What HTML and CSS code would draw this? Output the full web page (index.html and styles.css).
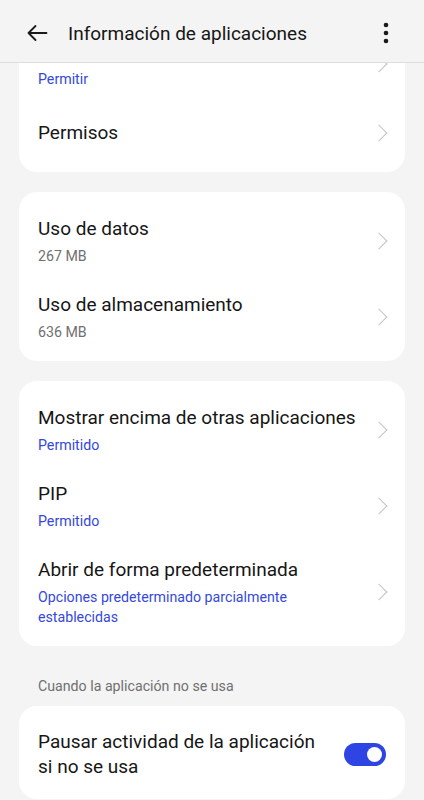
FILE: index.html
```html
<!DOCTYPE html>
<html lang="es">
<head>
<meta charset="utf-8">
<meta name="viewport" content="width=424, initial-scale=1">
<link rel="stylesheet" href="styles.css">
<title>Información de aplicaciones</title>
</head>
<body>
<div class="screen">
  <header class="appbar">
    <button class="icon-btn" aria-label="Atrás">
      <svg width="24" height="24" viewBox="0 0 24 24"><path d="M21.5 12H3.5M10.5 5L3.5 12L10.5 19" fill="none" stroke="#1a1a1a" stroke-width="1.8" stroke-linecap="round" stroke-linejoin="round"/></svg>
    </button>
    <h1 class="title">Información de aplicaciones</h1>
    <button class="icon-btn menu" aria-label="Más opciones">
      <svg width="6" height="22" viewBox="0 0 6 22"><circle cx="3" cy="3" r="2.3" fill="#1a1a1a"/><circle cx="3" cy="11" r="2.3" fill="#1a1a1a"/><circle cx="3" cy="19" r="2.3" fill="#1a1a1a"/></svg>
    </button>
  </header>
  <main class="content">
    <section class="card card-first">
      <div class="row">
        <div class="text">
          <div class="label-space"></div>
          <div class="sub accent">Permitir</div>
        </div>
        <span class="chev"></span>
      </div>
      <div class="row single">
        <div class="text"><div class="label">Permisos</div></div>
        <span class="chev"></span>
      </div>
    </section>

    <section class="card">
      <div class="row">
        <div class="text">
          <div class="label">Uso de datos</div>
          <div class="sub">267 MB</div>
        </div>
        <span class="chev"></span>
      </div>
      <div class="row">
        <div class="text">
          <div class="label">Uso de almacenamiento</div>
          <div class="sub">636 MB</div>
        </div>
        <span class="chev"></span>
      </div>
    </section>

    <section class="card">
      <div class="row">
        <div class="text">
          <div class="label">Mostrar encima de otras aplicaciones</div>
          <div class="sub accent">Permitido</div>
        </div>
        <span class="chev"></span>
      </div>
      <div class="row">
        <div class="text">
          <div class="label">PIP</div>
          <div class="sub accent">Permitido</div>
        </div>
        <span class="chev"></span>
      </div>
      <div class="row">
        <div class="text narrow">
          <div class="label">Abrir de forma predeterminada</div>
          <div class="sub accent">Opciones predeterminado parcialmente establecidas</div>
        </div>
        <span class="chev"></span>
      </div>
    </section>

    <div class="section-label">Cuando la aplicación no se usa</div>

    <section class="card">
      <div class="row toggle-row">
        <div class="text">
          <div class="label two">Pausar actividad de la aplicación si no se usa</div>
        </div>
        <span class="switch on"><span class="knob"></span></span>
      </div>
    </section>
  </main>
</div>
</body>
</html>
```

FILE: styles.css
```css
* { box-sizing: border-box; }
html, body { margin: 0; padding: 0; }
body {
  background: #f4f4f4;
  font-family: Roboto, "Noto Sans", "Liberation Sans", sans-serif;
  color: #161616;
}
.screen {
  width: 424px;
  height: 800px;
  overflow: hidden;
  display: flex;
  flex-direction: column;
}
.appbar {
  height: 63px;
  flex: 0 0 63px;
  display: flex;
  align-items: center;
  padding: 4px 32px 0 25px;
  border-bottom: 1px solid #dedede;
  background: #f4f4f4;
  position: relative;
  z-index: 2;
}
.icon-btn {
  background: none;
  border: 0;
  padding: 0;
  display: flex;
  align-items: center;
  justify-content: center;
  cursor: pointer;
}
.title {
  flex: 1;
  margin: 0 0 0 19px;
  font-size: 19px;
  font-weight: 400;
  color: #161616;
}
.menu { width: 12px; }
.content {
  flex: 1;
  overflow: hidden;
  padding: 0 19px;
  display: flex;
  flex-direction: column;
  gap: 20px;
}
.card {
  background: #fff;
  border-radius: 18px;
  padding: 10px 0 7px;
  flex: 0 0 auto;
}
.card-first {
  margin-top: -48px;
}
.row {
  display: flex;
  align-items: center;
  padding: 14px 18px 12px 19px;
  min-height: 76px;
}
.row.single { min-height: 64px; padding-top: 6px; padding-bottom: 6px; }
.text { flex: 1; min-width: 0; }
.text.narrow { padding-right: 48px; }
.label {
  font-size: 19px;
  line-height: 26px;
  color: #161616;
}
.label-space { height: 26px; }
.sub {
  font-size: 14.2px;
  line-height: 20px;
  color: #707070;
  margin-top: 4px;
}
.sub.accent { color: #3548dc; }
.chev {
  width: 12px;
  height: 12px;
  border-top: 1.5px solid #c4c4c4;
  border-right: 1.5px solid #c4c4c4;
  transform: rotate(45deg);
  margin: 0 2px 0 12px;
  flex: 0 0 auto;
}
.section-label {
  font-size: 14.2px;
  line-height: 20px;
  color: #707070;
  padding: 0 19px;
  margin: 10px 0 -10px;
}
.toggle-row { padding-top: 13px; padding-bottom: 13px; }
.toggle-row .text { padding-right: 22px; }
.label.two { line-height: 25px; }
.switch {
  width: 42px;
  height: 23px;
  border-radius: 12px;
  background: #2f45e3;
  display: flex;
  align-items: center;
  justify-content: flex-end;
  padding: 0 4px;
  flex: 0 0 auto;
  margin-right: 1px;
}
.knob {
  width: 15px;
  height: 15px;
  border-radius: 50%;
  background: #fff;
}
```
